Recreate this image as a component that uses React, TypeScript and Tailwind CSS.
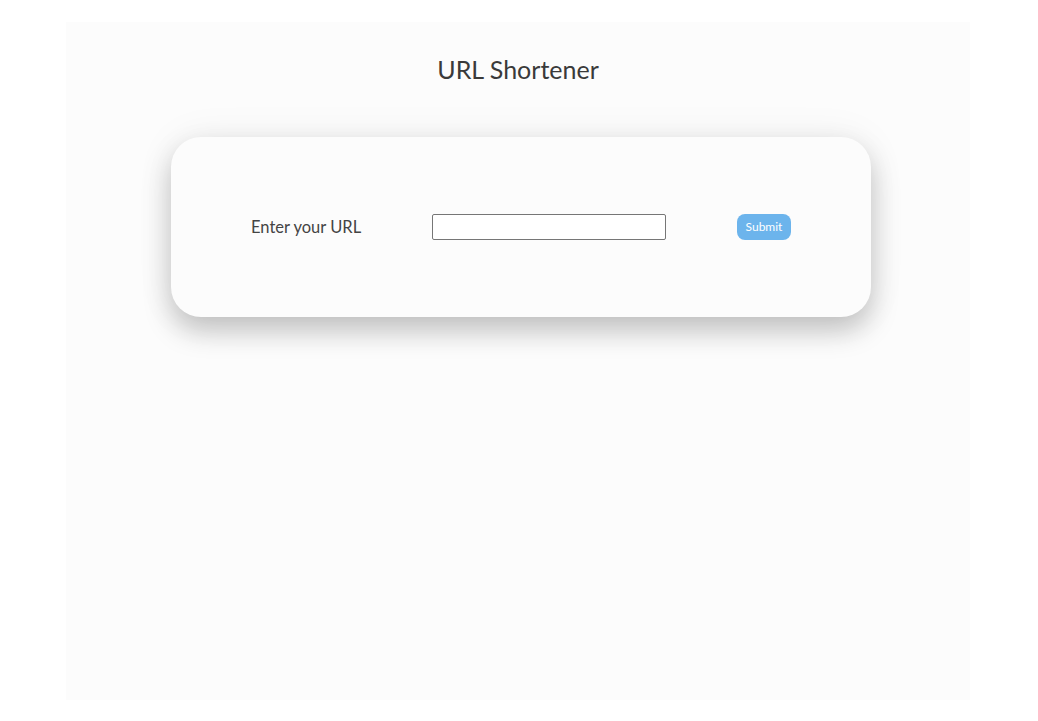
export default function App() {
  return (
    <div className="min-h-screen bg-white pt-[22px] font-['Lato','Noto_Sans',sans-serif]">
      <div className="ml-[66px] h-[678px] w-[904px] bg-[#fcfcfc] pt-[35px]">
        <h1 className="text-center text-[25px] leading-none text-[#3a3a3a]">URL Shortener</h1>
        <div className="ml-[105px] mt-[55px] flex h-[180px] w-[700px] items-center justify-between rounded-[30px] bg-[#fcfcfc] px-[80px] shadow-[0_14px_28px_rgba(0,0,0,0.22),0_0_40px_rgba(0,0,0,0.06)]">
          <label className="w-[110px] whitespace-nowrap text-[16.5px] text-[#444]">Enter your URL</label>
          <input
            type="text"
            className="h-[26px] w-[234px] rounded-[2px] border border-[#767676] bg-white"
          />
          <button className="h-[26px] w-[54px] rounded-[8px] bg-[#6cb4ec] text-[12px] text-white">
            Submit
          </button>
        </div>
      </div>
    </div>
  );
}
